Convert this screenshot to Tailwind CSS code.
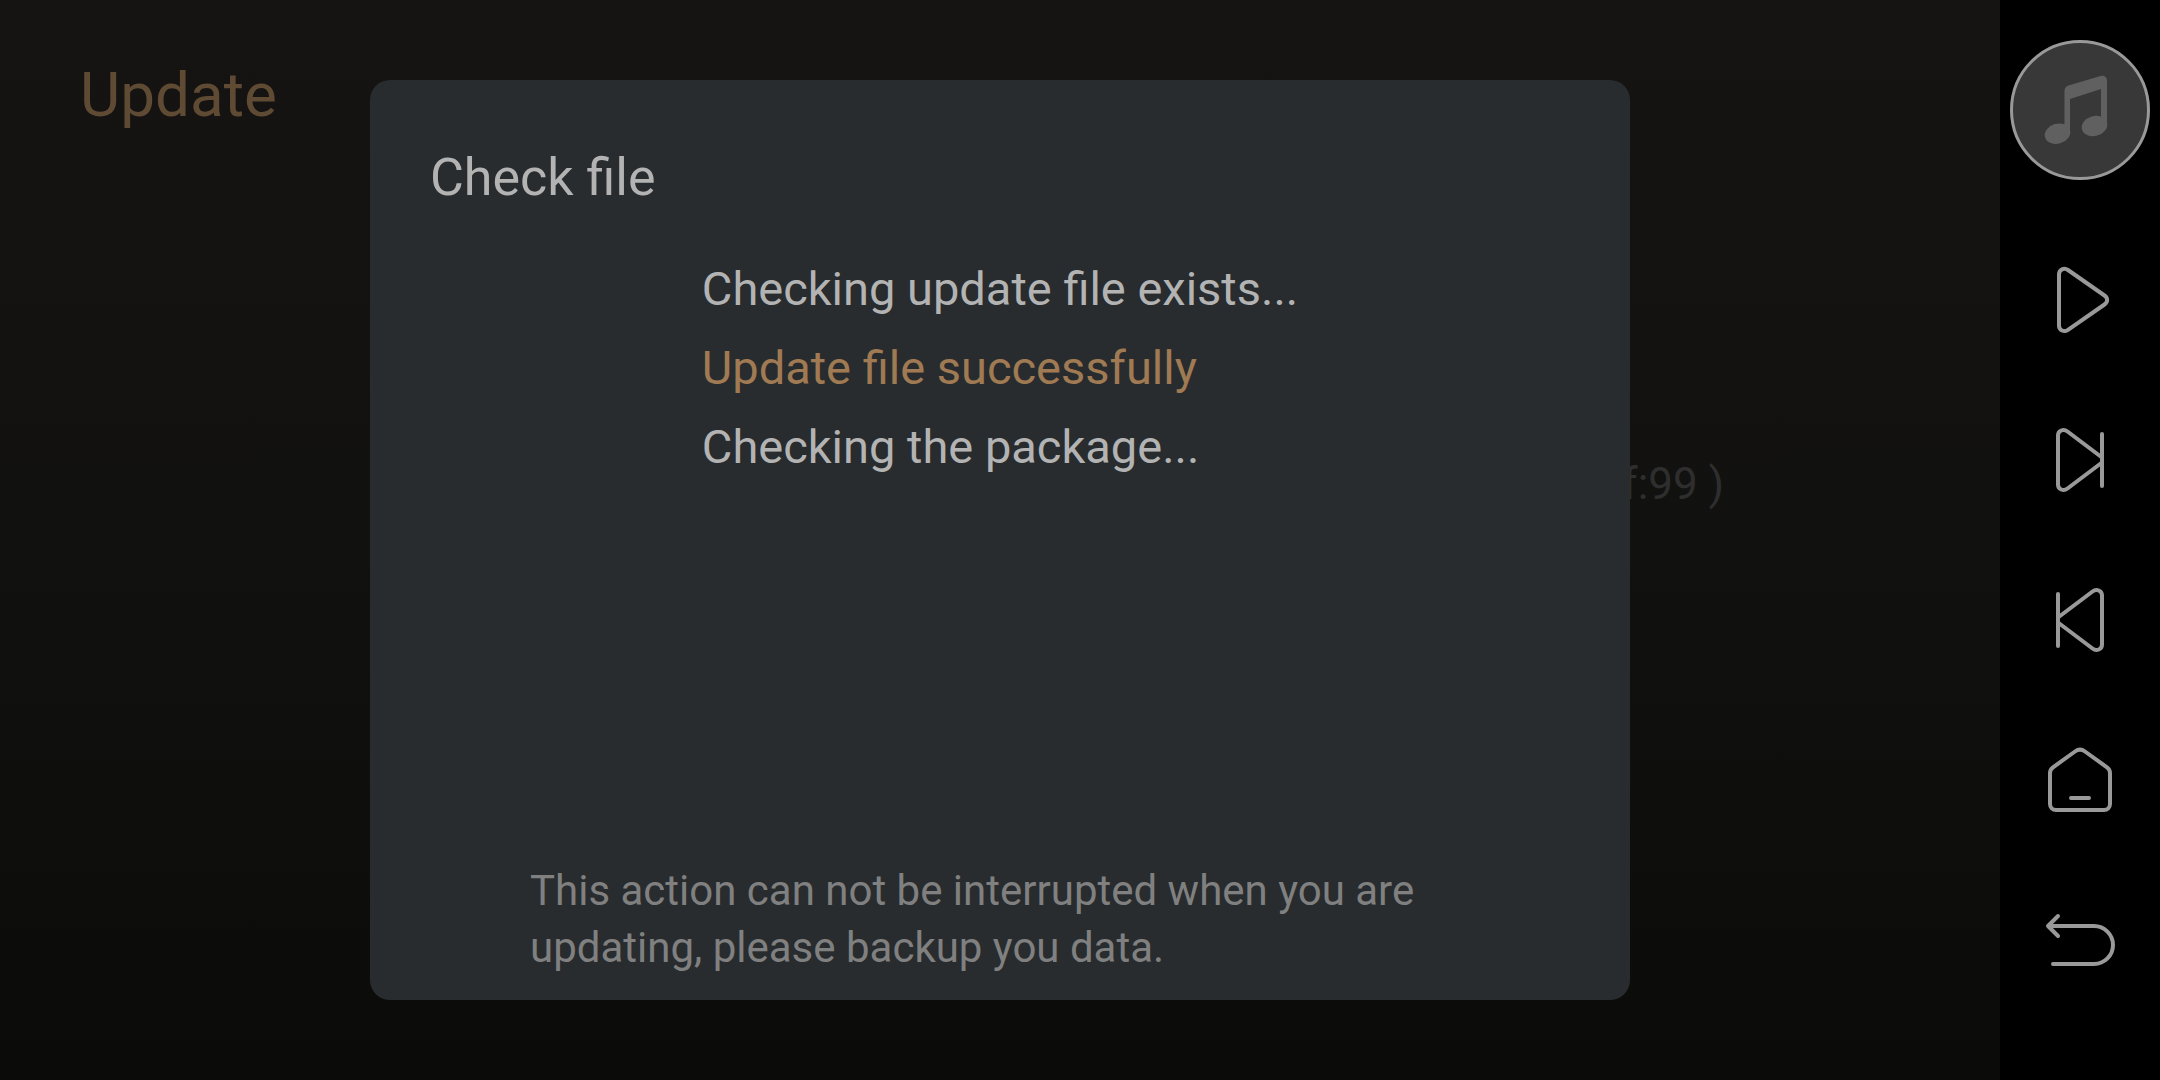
<!DOCTYPE html>
<html lang="en">
<head>
  <meta charset="UTF-8">
  <meta name="viewport" content="width=device-width, initial-scale=1.0">
  <title>Update</title>
  <script src="https://cdn.jsdelivr.net/npm/@tailwindcss/browser@4"></script>
</head>
<body class="bg-black font-[Roboto,sans-serif]">
  <div class="flex min-h-screen">

    <!-- Update screen -->
    <main class="relative flex-1 bg-linear-to-b from-[#161412] via-[#11110f] to-[#0b0b09]">
      <h1 class="px-20 pt-[59px] text-[62px] leading-[72px] text-[#5f4a33]">Update</h1>
      <p class="pt-[325px] pr-[276px] text-right text-[44px] leading-[56px] text-[#2e2e2e]">f:99 )</p>

      <!-- Dialog -->
      <div class="absolute inset-0 flex justify-center py-20">
        <section role="dialog" aria-labelledby="dialogTitle" class="flex w-[63%] flex-col rounded-[20px] bg-[#282c2e] px-[60px] pt-[67px] pb-6">
          <h2 id="dialogTitle" class="text-[52px] leading-[62px] text-[#b3b3b3]">Check file</h2>
          <div class="mx-auto mt-10 text-[47px] leading-[79px] text-[#b3b3b3]">
            <p>Checking update file exists...</p>
            <p class="text-[#a07a53]">Update file successfully</p>
            <p>Checking the package...</p>
          </div>
          <p class="mx-[100px] mt-auto text-[42px] leading-[57px] text-[#808080]">This action can not be interrupted when you are updating, please backup you data.</p>
        </section>
      </div>
    </main>

    <!-- Navigation bar -->
    <nav class="flex w-40 flex-col items-center gap-10 bg-black pt-10 text-[#999999]">
      <button type="button" aria-label="Music" class="size-[140px] rounded-full border-3 border-[#999999] bg-[#383838] text-[#606060]">
        <svg class="size-full" viewBox="3 3 134 134" fill="currentColor">
          <path d="M54.500 94V51C54.500 48 56 46.300 58.500 45.500L90.500 35.900C94 34.900 97 37 97 40.500V85L91 86V49L60 59V94Z"/>
          <ellipse cx="47.500" cy="93.700" rx="13" ry="10" transform="rotate(-16 47.500 93.700)"/>
          <ellipse cx="84.500" cy="86" rx="13" ry="10" transform="rotate(-16 84.500 86)"/>
        </svg>
      </button>

      <div class="flex flex-col">
        <button type="button" aria-label="Play" class="flex size-40 items-center justify-center">
          <svg class="size-20" viewBox="0 0 80 80" fill="none" stroke="currentColor" stroke-width="4" stroke-linecap="round" stroke-linejoin="round">
            <path d="M19 14.500C19 9.500 24 7.300 28 10L64.500 35.500C68 38 68 42 64.500 44.500L28 69.800C24 72.500 19 70.300 19 65.500Z"/>
          </svg>
        </button>
        <button type="button" aria-label="Next" class="flex size-40 items-center justify-center">
          <svg class="size-20" viewBox="0 0 80 80" fill="none" stroke="currentColor" stroke-width="4" stroke-linecap="round" stroke-linejoin="round">
            <path d="M62 37.500L27.500 11.500C23.500 8.500 18 10.500 18 15.500V64.500C18 69.500 23.500 71.500 27.500 68.500L62 42.500M62 14V66"/>
          </svg>
        </button>
        <button type="button" aria-label="Previous" class="flex size-40 items-center justify-center">
          <svg class="size-20" viewBox="0 0 80 80" fill="none" stroke="currentColor" stroke-width="4" stroke-linecap="round" stroke-linejoin="round">
            <path d="M18 37.500L52.500 11.500C56.500 8.500 62 10.500 62 15.500V64.500C62 69.500 56.500 71.500 52.500 68.500L18 42.500M18 14V66"/>
          </svg>
        </button>
        <button type="button" aria-label="Home" class="flex size-40 items-center justify-center">
          <svg class="size-20" viewBox="0 0 80 80" fill="none" stroke="currentColor" stroke-width="4" stroke-linecap="round" stroke-linejoin="round">
            <path d="M35 11.500C38 9.300 42 9.300 45 11.500L67 27.300C69 28.800 70 30.500 70 33V64A6 6 0 0 1 64 70H16A6 6 0 0 1 10 64V33C10 30.500 11 28.800 13 27.300ZM31 58H49"/>
          </svg>
        </button>
        <button type="button" aria-label="Back" class="flex size-40 items-center justify-center">
          <svg class="size-20" viewBox="0 0 80 80" fill="none" stroke="currentColor" stroke-width="4" stroke-linecap="round" stroke-linejoin="round">
            <path d="M18 16L8 26L18 36M8 26H54A19 19 0 0 1 54 64H13"/>
          </svg>
        </button>
      </div>
    </nav>

  </div>
</body>
</html>
